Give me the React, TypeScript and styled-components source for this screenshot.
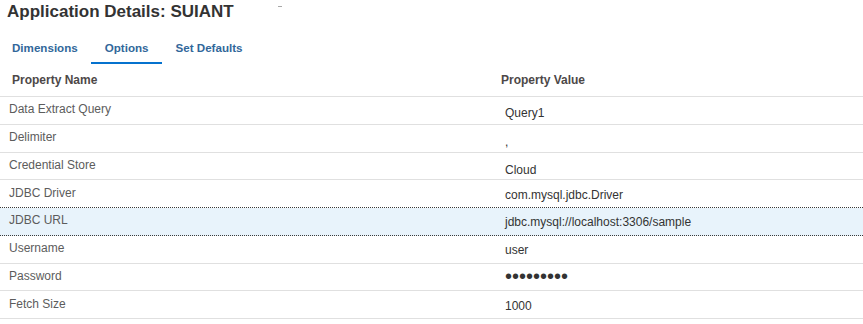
import React from "react";
import styled, { createGlobalStyle } from "styled-components";

const Global = createGlobalStyle`
  html, body { margin: 0; padding: 0; background: #ffffff; }
  body { font-family: "Liberation Sans", Arial, sans-serif; color: #333333; }
  * { box-sizing: border-box; }
`;

const Page = styled.div`
  width: 863px;
  height: 324px;
  overflow: hidden;
  background: #ffffff;
`;

const TitleRow = styled.div`
  display: flex;
  align-items: flex-start;
  padding: 2px 7px 0;
`;

const Title = styled.h1`
  margin: 0;
  font-size: 17px;
  line-height: 20px;
  font-weight: bold;
  color: #333333;
`;

const Mark = styled.span`
  width: 4px;
  height: 1px;
  margin: 4px 0 0 44px;
  background: #a8a8a8;
`;

const TabBar = styled.div`
  display: flex;
  margin-top: 12px;
`;

const Tab = styled.div<{ $active?: boolean; $first?: boolean }>`
  padding: 6px 13.5px 6px ${(p) => (p.$first ? "12px" : "13.5px")};
  font-size: 11.6px;
  line-height: 16px;
  font-weight: bold;
  color: #31679a;
  border-bottom: 2px solid ${(p) => (p.$active ? "#0572ce" : "transparent")};
`;

const Table = styled.div`
  display: flex;
  flex-direction: column;
`;

const HeaderRow = styled.div`
  display: grid;
  grid-template-columns: 489px 1fr;
  height: 33px;
  padding-bottom: 1px;
  align-items: center;
  border-bottom: 1px solid #e0e0e0;
`;

const HeaderCell = styled.div`
  padding-left: 12px;
  font-size: 12px;
  font-weight: bold;
  color: #4d4848;
`;

const Row = styled.div<{ $selected?: boolean; $dashed?: boolean }>`
  display: grid;
  grid-template-columns: 489px 1fr;
  height: 27.75px;
  align-items: center;
  background: ${(p) => (p.$selected ? "#e8f3fb" : "#ffffff")};
  border-bottom: 1px ${(p) => (p.$dashed ? "dotted #3a3a3a" : "solid #e0e0e0")};
`;

const NameCell = styled.div`
  padding-left: 9px;
  padding-bottom: 2px;
  font-size: 12px;
  color: #5c5c5c;
  white-space: nowrap;
`;

const ValueCell = styled.div<{ $shift: number }>`
  padding-left: 16px;
  padding-top: ${(p) => p.$shift * 2}px;
  font-size: 12px;
  color: #333333;
  white-space: nowrap;
`;

const Dots = styled.span`
  font-size: 20px;
  line-height: 12px;
  color: #333333;
`;

type Item = { name: string; value: string; shift: number; secret?: boolean };

const items: Item[] = [
  { name: "Data Extract Query", value: "Query1", shift: 3 },
  { name: "Delimiter", value: ",", shift: 4 },
  { name: "Credential Store", value: "Cloud", shift: 4 },
  { name: "JDBC Driver", value: "com.mysql.jdbc.Driver", shift: 1 },
  { name: "JDBC URL", value: "jdbc.mysql://localhost:3306/sample", shift: 1 },
  { name: "Username", value: "user", shift: 1 },
  { name: "Password", value: "•••••••••", shift: 1, secret: true },
  { name: "Fetch Size", value: "1000", shift: 1 },
];

export default function App() {
  return (
    <Page>
      <Global />
      <TitleRow>
        <Title>Application Details: SUIANT</Title>
        <Mark />
      </TitleRow>
      <TabBar>
        <Tab $first>Dimensions</Tab>
        <Tab $active>Options</Tab>
        <Tab>Set Defaults</Tab>
      </TabBar>
      <Table>
        <HeaderRow>
          <HeaderCell>Property Name</HeaderCell>
          <HeaderCell>Property Value</HeaderCell>
        </HeaderRow>
        {items.map((it) => (
          <Row
            key={it.name}
            $selected={it.name === "JDBC URL"}
            $dashed={it.name === "JDBC URL" || it.name === "JDBC Driver"}
          >
            <NameCell>{it.name}</NameCell>
            <ValueCell $shift={it.shift}>
              {it.secret ? <Dots>{it.value}</Dots> : it.value}
            </ValueCell>
          </Row>
        ))}
      </Table>
    </Page>
  );
}
